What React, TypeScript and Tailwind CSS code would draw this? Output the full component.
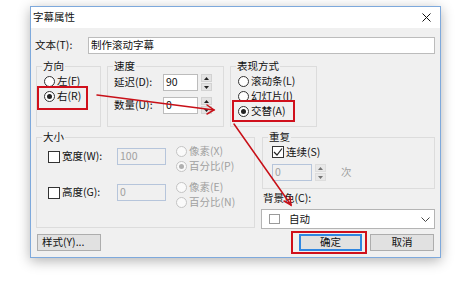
import React from "react";

const cjk = "font-['Noto_Sans_CJK_SC',sans-serif] text-[10.5px] leading-none text-[#111]";

function Radio({ label, checked = false, disabled = false }: { label: string; checked?: boolean; disabled?: boolean }) {
  return (
    <div className="flex items-center h-[15px]">
      <span
        className={`w-[11px] h-[11px] rounded-full border flex items-center justify-center ${
          disabled ? "border-[#c4c4c4] bg-[#fafafa]" : "border-[#333] bg-white"
        }`}
      >
        {checked && <span className={`w-[5px] h-[5px] rounded-full ${disabled ? "bg-[#b0b0b0]" : "bg-[#222]"}`} />}
      </span>
      <span className={`ml-[2px] ${disabled ? "text-[#a0a0a0]" : ""}`}>{label}</span>
    </div>
  );
}

function Check({ checked = false }: { checked?: boolean }) {
  return (
    <span className="w-[12px] h-[12px] border border-[#333] bg-white flex items-center justify-center shrink-0">
      {checked && (
        <svg width="10" height="10" viewBox="0 0 10 10">
          <polyline points="1,5 4,8 9,1.5" fill="none" stroke="#222" strokeWidth="1.2" />
        </svg>
      )}
    </span>
  );
}

function Spin({ h = 17 }: { h?: number }) {
  return (
    <div className={`flex flex-col gap-[1px] w-[11px] ${h === 17 ? "h-[17px]" : "h-[17px]"}`}>
      <div className="flex-1 bg-[#e3e3e3] border border-[#d2d2d2] flex items-center justify-center">
        <svg width="5" height="3" viewBox="0 0 5 3">
          <polygon points="0,3 2.5,0 5,3" fill="#222" />
        </svg>
      </div>
      <div className="flex-1 bg-[#e3e3e3] border border-[#d2d2d2] flex items-center justify-center">
        <svg width="5" height="3" viewBox="0 0 5 3">
          <polygon points="0,0 2.5,3 5,0" fill="#222" />
        </svg>
      </div>
    </div>
  );
}

function Group({ title, className, children }: { title: string; className: string; children: React.ReactNode }) {
  return (
    <fieldset className={`border border-[#dcdcdc] ${className}`}>
      <legend className="ml-[5px] px-[1px] leading-[14px]">{title}</legend>
      {children}
    </fieldset>
  );
}

export default function App() {
  return (
    <div className={`relative w-[462px] h-[282px] bg-white overflow-hidden pt-[6px] pl-[30px] ${cjk}`}>
      <div className="w-[411px] h-[252px] border border-[#7ea9dc] flex flex-col shadow-[0_3px_12px_rgba(0,0,0,0.3)]">
        {/* title bar */}
        <div className="h-[21px] bg-white flex items-center justify-between pl-[2px] pr-[9px]">
          <span>字幕属性</span>
          <svg width="9" height="9" viewBox="0 0 9 9">
            <path d="M0.5 0.5 L8.5 8.5 M8.5 0.5 L0.5 8.5" stroke="#111" strokeWidth="1" />
          </svg>
        </div>

        <div className="flex-1 bg-[#f0f0f0] pl-[4px] pr-[5px] flex flex-col">
          {/* 文本 */}
          <div className="mt-[9px] h-[17px] flex items-center">
            <span className="w-[53px]">文本(T):</span>
            <div className="flex-1 h-full border border-[#bcbcbc] bg-white flex items-center pl-[2px]">制作滚动字幕</div>
          </div>

          {/* groups row */}
          <div className="mt-[5px] flex gap-[6px] pl-[1px]">
            <Group title="方向" className="w-[65px] h-[68px]">
              <div className="pl-[7px] pt-[1px]">
                <Radio label="左(F)" />
                <Radio label="右(R)" checked />
              </div>
            </Group>
            <Group title="速度" className="w-[117px] h-[68px]">
              <div className="pl-[6px] pt-[1px] flex flex-col gap-[6px]">
                <div className="flex items-center h-[17px]">
                  <span className="w-[49px]">延迟(D):</span>
                  <div className="w-[35px] h-full border border-[#bcbcbc] bg-white flex items-center pl-[2px]">90</div>
                  <div className="ml-[3px]"><Spin /></div>
                </div>
                <div className="flex items-center h-[17px]">
                  <span className="w-[49px]">数量(U):</span>
                  <div className="w-[35px] h-full border border-[#bcbcbc] bg-white flex items-center pl-[2px]">0</div>
                  <div className="ml-[3px]"><Spin /></div>
                </div>
              </div>
            </Group>
            <Group title="表现方式" className="w-[87px] h-[68px]">
              <div className="pl-[7px] pt-[1px]">
                <Radio label="滚动条(L)" />
                <Radio label="幻灯片(I)" />
                <Radio label="交替(A)" checked />
              </div>
            </Group>
          </div>

          {/* size + right column */}
          <div className="mt-[3px] flex gap-[6px] pl-[1px]">
            <Group title="大小" className="w-[219px] h-[98px]">
              <div className="pl-[11px] flex flex-col gap-[6px]">
                <div className="flex items-start">
                  <div className="mt-[4px] h-[17px] flex items-center">
                    <Check />
                    <span className="ml-[2px] w-[55px]">宽度(W):</span>
                    <div className="w-[49px] h-full border border-[#b6c5db] flex items-center pl-[2px] text-[#a0a0a0]">100</div>
                  </div>
                  <div className="ml-[10px]">
                    <Radio label="像素(X)" disabled />
                    <Radio label="百分比(P)" disabled checked />
                  </div>
                </div>
                <div className="flex items-start">
                  <div className="mt-[4px] h-[17px] flex items-center">
                    <Check />
                    <span className="ml-[2px] w-[55px]">高度(G):</span>
                    <div className="w-[49px] h-full border border-[#b6c5db] flex items-center pl-[2px] text-[#a0a0a0]">0</div>
                  </div>
                  <div className="ml-[10px]">
                    <Radio label="像素(E)" disabled />
                    <Radio label="百分比(N)" disabled />
                  </div>
                </div>
              </div>
            </Group>

            <div className="w-[174px] flex flex-col">
              <Group title="重复" className="ml-[1px] w-[173px] h-[59px]">
                <div className="pl-[9px]">
                  <div className="h-[16px] flex items-center">
                    <Check checked />
                    <span className="ml-[2px]">连续(S)</span>
                  </div>
                  <div className="mt-[4px] h-[17px] flex items-center">
                    <div className="w-[40px] h-full border border-[#b6c5db] flex items-center pl-[2px] text-[#a0a0a0]">0</div>
                    <div className="ml-[3px] opacity-60"><Spin /></div>
                    <span className="ml-[15px] text-[#a0a0a0]">次</span>
                  </div>
                </div>
              </Group>
              <div className="mt-[1px] h-[16px] flex items-center pl-[2px]">背景色(C):</div>
              <div className="mt-[3px] h-[20px] border border-[#b4b4b4] bg-white flex items-center pl-[7px] pr-[4px]">
                <span className="w-[11px] h-[10px] border border-[#9a9a9a] bg-white" />
                <span className="ml-[9px] flex-1">自动</span>
                <svg width="9" height="5" viewBox="0 0 9 5">
                  <polyline points="0.5,0.5 4.5,4.5 8.5,0.5" fill="none" stroke="#444" strokeWidth="1" />
                </svg>
              </div>
            </div>
          </div>

          {/* buttons */}
          <div className="mt-[5px] flex items-center justify-between">
            <button className="ml-[2px] w-[64px] h-[17px] bg-[#e1e1e1] border border-[#adadad] flex items-center pl-[4px]">样式(Y)...</button>
            <div className="flex gap-[8px] mr-[1px]">
              <button className="w-[63px] h-[17px] bg-[#e1e1e1] border-2 border-[#2f86e0] flex items-center justify-center">确定</button>
              <button className="w-[64px] h-[17px] bg-[#e1e1e1] border border-[#adadad] flex items-center justify-center">取消</button>
            </div>
          </div>
        </div>
      </div>

      {/* annotations */}
      <svg className="absolute inset-0 pointer-events-none" width="462" height="282" viewBox="0 0 462 282">
        <g fill="none" stroke="#d0101c" strokeWidth="2">
          <rect x="38" y="87" width="49" height="22" />
          <rect x="233" y="101" width="61" height="20" />
          <rect x="292" y="232" width="74" height="21" />
        </g>
        <g fill="none" stroke="#c81018" strokeWidth="1.5" strokeLinecap="round">
          <line x1="97" y1="95" x2="214" y2="110" />
          <polyline points="207,105 214,110 207,114" />
          <line x1="234" y1="124" x2="291" y2="205" />
          <polyline points="284,201 291,205 290,197" />
        </g>
      </svg>
    </div>
  );
}
